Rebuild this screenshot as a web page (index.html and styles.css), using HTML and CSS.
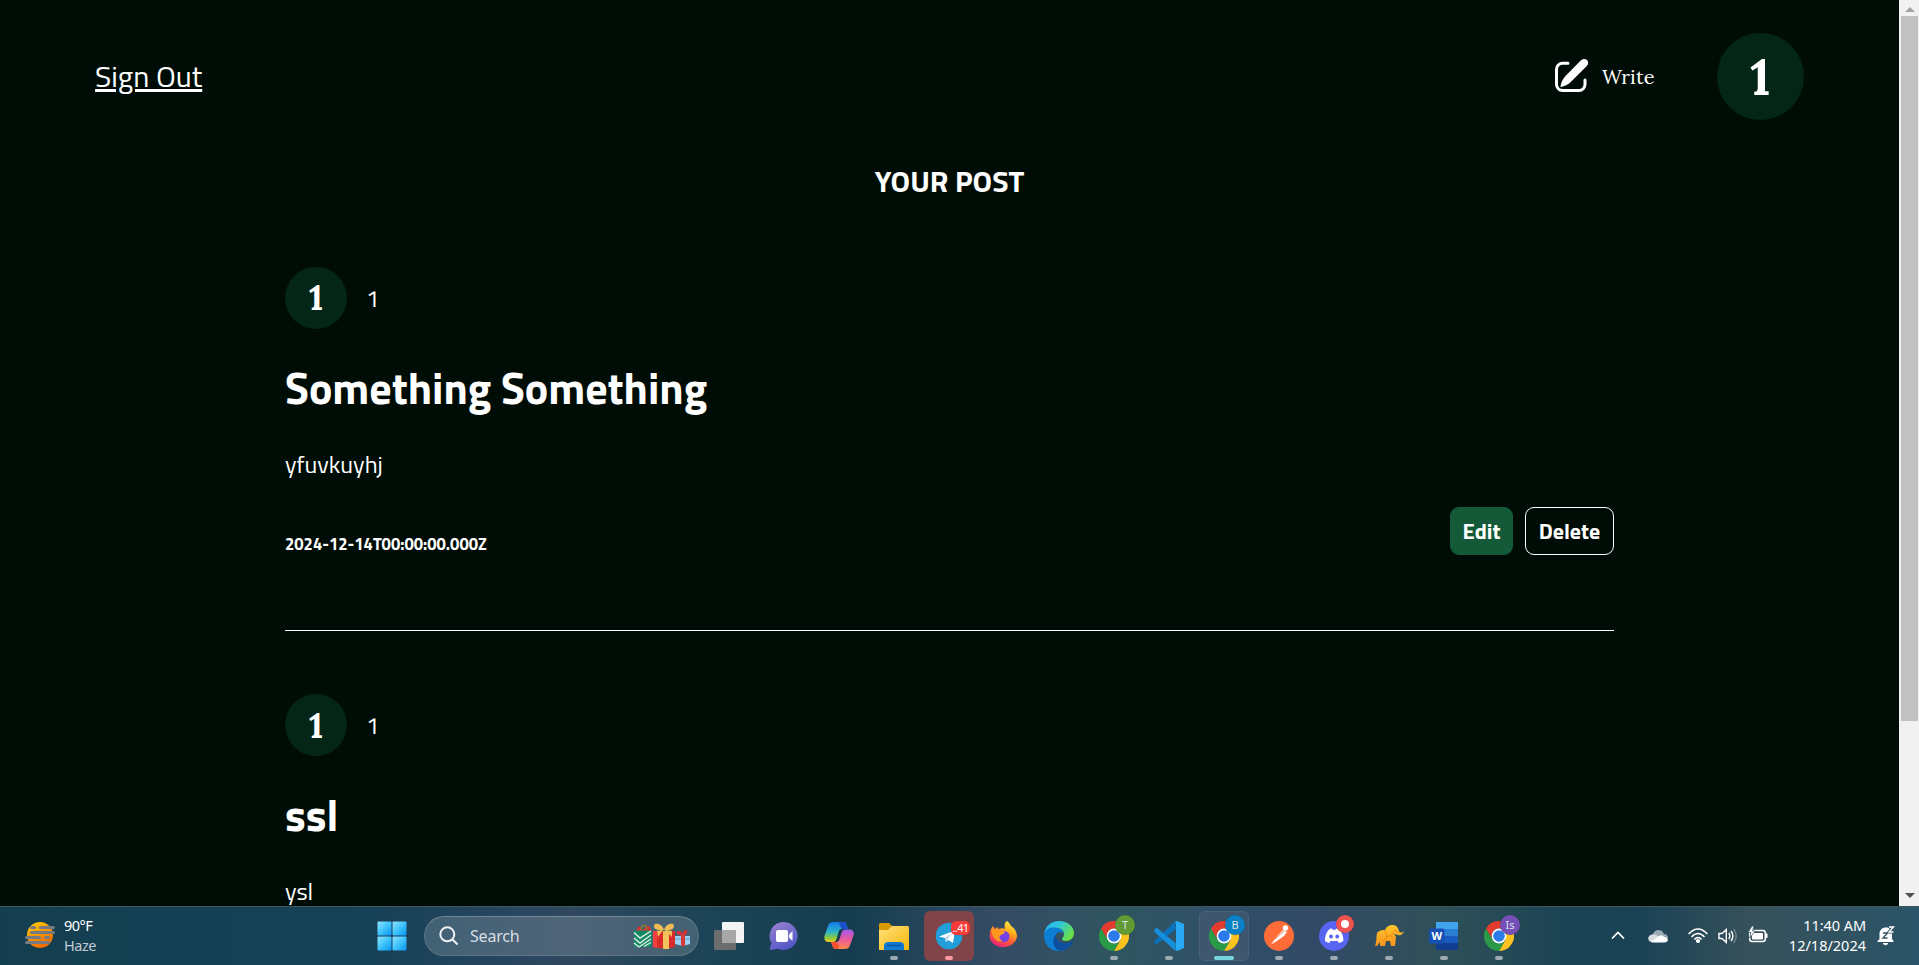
FILE: index.html
```html
<!DOCTYPE html>
<html lang="en">
<head>
<meta charset="utf-8">
<title>Your Post</title>
<link rel="stylesheet" href="styles.css">
</head>
<body>
<svg class="defs" width="0" height="0" aria-hidden="true">
  <defs>
    <linearGradient id="gWin" x1="0" y1="0" x2="1" y2="1"><stop offset="0" stop-color="#8fe3ff"/><stop offset=".5" stop-color="#3fc3fb"/><stop offset="1" stop-color="#0a93f5"/></linearGradient>
    <linearGradient id="gSun" x1="0" y1="0" x2="0.5" y2="1"><stop offset="0" stop-color="#ffd000"/><stop offset="1" stop-color="#f06a00"/></linearGradient>
    <linearGradient id="gChat" x1="0" y1="0" x2="0.5" y2="1"><stop offset="0" stop-color="#9d84cf"/><stop offset="1" stop-color="#5558c8"/></linearGradient>
    <linearGradient id="gCopA" x1="0" y1="0" x2="0" y2="1"><stop offset="0" stop-color="#1478e8"/><stop offset=".5" stop-color="#2bb5c8"/><stop offset=".8" stop-color="#8fcb3a"/><stop offset="1" stop-color="#f2c51c"/></linearGradient>
    <linearGradient id="gCopB" x1="0" y1="0" x2="0" y2="1"><stop offset="0" stop-color="#a05af0"/><stop offset=".5" stop-color="#ea5a9c"/><stop offset="1" stop-color="#ff8a4a"/></linearGradient>
    <linearGradient id="gFold" x1="0" y1="0" x2="1" y2="1"><stop offset="0" stop-color="#ffe07a"/><stop offset="1" stop-color="#f8b60c"/></linearGradient>
    <linearGradient id="gFox" x1=".8" y1="0" x2=".3" y2="1"><stop offset="0" stop-color="#fff04a"/><stop offset=".35" stop-color="#ffb01e"/><stop offset=".65" stop-color="#ff5a36"/><stop offset="1" stop-color="#e6207c"/></linearGradient>
    <linearGradient id="gEdge" x1="0" y1="0" x2="1" y2=".5"><stop offset="0" stop-color="#2aa8ee"/><stop offset=".5" stop-color="#30c8d8"/><stop offset="1" stop-color="#6be04a"/></linearGradient>
    <linearGradient id="gEl" x1="0" y1="0" x2="0" y2="1"><stop offset="0" stop-color="#ffc72e"/><stop offset="1" stop-color="#f7941d"/></linearGradient>
    <symbol id="chrome" viewBox="0 0 30 30">
      <path d="M28 7.500A15 15 0 0 1 15 30l6.500-11.300L21.500 11 15 7.500Z" fill="#fcc31e"/>
      <path d="M2 7.500A15 15 0 0 1 28 7.500H15A7.500 7.500 0 0 0 8.300 18.300Z" fill="#e33b2e"/>
      <path d="M2 7.500A15 15 0 0 0 15 30l6.500-11.300A7.500 7.500 0 0 1 8.400 18.600Z" fill="#2b9a46"/>
      <circle cx="15" cy="15" r="7.400" fill="#fff"/><circle cx="15" cy="15" r="5.800" fill="#2b7bea"/>
    </symbol>
  </defs>
</svg>
<div class="browser">
  <main class="page">
    <header class="topbar">
      <a class="signout">Sign Out</a>
      <div class="actions">
        <a class="write">
          <svg width="36" height="37" viewBox="0 0 36 37"><path d="M14 5.2H8.500A6 6 0 0 0 2.500 11.200V26.500A6 6 0 0 0 8.500 32.500H25A6 6 0 0 0 31 26.500V22" fill="none" stroke="#fff" stroke-width="3" stroke-linecap="round"/><path d="M26.500 2.700C28.600.8 31.300.4 33 2c1.800 1.800 1.500 4.300-.4 6.200L16.500 24.300C13.800 26.800 10.500 28.200 6.800 29 6.600 29 6.400 28.700 6.500 28.300 7.200 24.400 8.600 21.400 11 18.600Z" fill="#fff"/></svg>
          <span class="write-label">Write</span>
        </a>
        <div class="avatar avatar-lg"><span>1</span></div>
      </div>
    </header>
    <h1 class="heading">YOUR POST</h1>
    <article class="post">
      <div class="author"><div class="avatar"><span>1</span></div><span class="name">1</span></div>
      <h2 class="title">Something Something</h2>
      <p class="text">yfuvkuyhj</p>
      <div class="foot">
        <span class="date">2024-12-14T00:00:00.000Z</span>
        <div class="buttons"><button class="btn edit">Edit</button><button class="btn delete">Delete</button></div>
      </div>
    </article>
    <article class="post post-next">
      <div class="author"><div class="avatar"><span>1</span></div><span class="name">1</span></div>
      <h2 class="title">ssl</h2>
      <p class="text">ysl</p>
    </article>
  </main>
  <div class="scrollbar">
    <div class="arrow"><svg width="10" height="5"><path d="M0 5 5 0l5 5Z" fill="#a3a3a3"/></svg></div>
    <div class="thumb"></div>
    <div class="arrow arrow-down"><svg width="10" height="5"><path d="M0 0 5 5l5-5Z" fill="#505050"/></svg></div>
  </div>
</div>
<footer class="taskbar">
  <div class="weather">
    <svg width="30" height="26" viewBox="0 0 30 26"><circle cx="15" cy="13" r="13" fill="url(#gSun)"/><g stroke="#777a80" stroke-width="3" stroke-linecap="round"><path d="M6.500 5.500h3M15.500 5.500h13M6.500 10.500h22M1.500 15.500h13M20.500 15.500h3M1.500 20.500h22"/></g></svg>
    <div class="weather-text"><span>90°F</span><span class="dim">Haze</span></div>
  </div>
  <div class="apps">
    <div class="app start"><svg width="30" height="30"><g fill="url(#gWin)"><rect x=".5" y=".5" width="14" height="14" rx="1"/><rect x="15.500" y=".5" width="14" height="14" rx="1"/><rect x=".5" y="15.500" width="14" height="14" rx="1"/><rect x="15.500" y="15.500" width="14" height="14" rx="1"/></g></svg></div>
    <div class="search">
      <svg width="20" height="20" viewBox="0 0 20 20" fill="none" stroke="#eef2f4" stroke-width="2"><circle cx="8.300" cy="8.300" r="7"/><path d="M13.300 13.300 18.500 18.500"/></svg>
      <span>Search</span>
      <svg class="gifts" width="58" height="28" viewBox="0 0 58 28">
        <path d="M3 9 6 4l4 4 5-5 4 6Z" fill="#d83232"/><path d="M8 8C8 2 14 2 14 8" fill="none" stroke="#8a7a30" stroke-width="1.500"/>
        <path d="M1 8.500h18V22L17 25H1Z" fill="#148a64"/><path d="M1 10.500l6 5.500 11-7M1 16l6 5 11-8M1 21l5 4 12-8M11 24.500l7-4" fill="none" stroke="#dceee6" stroke-width="1.400"/>
        <path d="M20 9h22v16l-10 2-12-2Z" fill="#d92b2b"/><path d="M30 9h6v18h-6Z" fill="#f2c35a"/><path d="M20 25V9l4 0v17Z" fill="#f04040"/><path d="M31 8C20 9 20 4 22 2c4-1 8 2 9 6 1-4 5-7 9-6 2 2 2 7-9 6ZM30 8l-5 7-1-6ZM32 8l7 7 0-6Z" fill="#f0bd55"/>
        <path d="M42 14h15v8l-7 2-8-2Z" fill="#9bd0f2"/><path d="M42 17h15" stroke="#5b9fd8"/><path d="M48 13h4v11h-4Z" fill="#d83a3a"/><path d="M50 13c-8 1-7-4-5-4 3 0 5 2 5 4 0-6 3-6 4-4s-1 4-4 4" fill="#d82f3a"/>
      </svg>
    </div>
    <div class="app"><svg width="30" height="30"><rect x="8" y="1" width="22" height="21" rx="1" fill="#f3f3f3"/><rect x="0" y="9" width="22" height="20" rx="1" fill="#6c6c6c"/><path d="M8 9h14v13H8Z" fill="#a7a7a7"/></svg></div>
    <div class="app"><svg width="30" height="30"><path d="M15 1A14 14 0 1 1 9 27.800L2 29c-1 0-1.500-1-1-2l1.500-5A14 14 0 0 1 15 1Z" fill="url(#gChat)"/><rect x="7" y="9" width="12" height="12" rx="2" fill="#fff"/><path d="M20 13.500 23.500 10v10L20 16.500Z" fill="#fff"/></svg></div>
    <div class="app"><svg width="30" height="30"><path d="M9 1H19c2 0 3 1 3.500 3L24 8h-6c-2 0-3 1-3.500 3l-2 7c-.5 2-1.500 3-3.500 3H4c-3 0-4-3-3.500-6L4 5c1-3 2.500-4 5-4Z" fill="url(#gCopA)"/><path d="M15 1h4c2 0 3 1 3.500 3L24 8h-6L15.500 4Z" fill="#1a4fd0"/><path d="M21 28H12c-2 0-3-1-3.500-3L7 21h5c2 0 3-1 3.500-3l2-6c.5-2 1.500-3.500 4-3.500H26c3 0 4.500 3 3.500 6L26 24c-1 3-2.500 4-5 4Z" fill="url(#gCopB)"/><path d="M7 21h5l3 3-1 4h-2c-2 0-3-1-3.500-3Z" fill="#f2502e"/></svg></div>
    <div class="app open"><svg width="30" height="30"><path d="M0 4c0-1.500.5-2 2-2h8l3 3v6H0Z" fill="#d99a08"/><path d="M0 9h9l4-4h15c1.500 0 2 .5 2 2v22H0Z" fill="url(#gFold)"/><path d="M5 29v-4c0-3 1.500-4 4-4h12c2.500 0 4 1 4 4v4Z" fill="#0f7bd4"/><path d="M8 24.500h14" stroke="#0a55a0" stroke-width="1.500"/></svg></div>
    <div class="app alert open"><svg width="30" height="30"><circle cx="15" cy="15" r="13.300" fill="#229ed9"/><path d="M5 15.500 21 9.500 19 22l-5-3-2 2-1-4Z" fill="#fff"/><path d="M11 17 18 12l-5 6-1 3Z" fill="#a9cfe6"/></svg><span class="badge count">..41</span></div>
    <div class="app"><svg width="30" height="30"><path d="M18 0c2 1 3 3 4 5 4 2 6 7 6 11a14 12.500 0 0 1-27 2C0 12 2 7 4 5l2 3 3-2 0 2c3-1 5-1 7 0C15 4 16 1 18 0Z" fill="url(#gFox)"/><circle cx="15" cy="15.500" r="5.500" fill="#7542e5"/><path d="M2 8c4 1 6 0 9 2 2 0 4 0 5 1-1 2-3 2-4 3-3 1-1 6 2 6-7 2-11-4-12-12Z" fill="#ff9a1f"/></svg></div>
    <div class="app"><svg width="30" height="30"><path d="M0 14C1 5 7 0 15 0c9 0 15 6 15 12 0 5-4 8-8 8-3 0-4-1-4-2s2-2 2-5c0-4-4-6-8-6C6 7 1 10 0 14Z" fill="url(#gEdge)"/><path d="M0 15C0 9 5 6.500 10 6.500c5 0 9 2.500 9 6-1-1-3-1.500-5-1-4 2-5 8-1 13 3 4 8 4 10 3-3 2-5 2.500-8 2.500C7 30 0 24 0 15Z" fill="#0c7fd4"/><path d="M14 11.500c-3 2-3 6 1 9 4 2.500 9 2 13 0 1 0 1 .5.500 1.500C26 27 20 30 15 29.700 8 27 7 16 14 11.500Z" fill="#0d4f9e"/></svg></div>
    <div class="app open"><svg width="30" height="30"><use href="#chrome"/></svg><span class="badge green">T</span></div>
    <div class="app open"><svg width="30" height="30"><path d="M22 8 3 23c-1 .5-3-1-3-2.500L21 .5Z" fill="#0b72bd"/><path d="M3 7 22 22.500 21 29.500 0 10.500C0 9 2 6.500 3 7Z" fill="#148fdc"/><path d="M21 .5 23 0l7 3v24l-7 3-2-1 1-2V3Z" fill="#29a9f4"/></svg></div>
    <div class="app active"><svg width="30" height="30"><use href="#chrome"/></svg><span class="badge blue">B</span></div>
    <div class="app open"><svg width="30" height="30"><circle cx="15" cy="15" r="15" fill="#ff6c37"/><circle cx="21.500" cy="7" r="2.700" fill="#fff"/><path d="M19 9 23 11 20 15 13 20 7 23.500 12 16.500Z" fill="#fff"/><path d="M20 10 11 18" stroke="#ff6c37" stroke-width=".8"/></svg></div>
    <div class="app open"><svg width="30" height="30"><circle cx="15" cy="15" r="15" fill="#5865f2"/><path d="M9.500 9C11 8 12 7.700 13 7.600l.6 1.200h3L17.200 7.600C18.500 7.800 20 8.300 21 9c3 4 3.500 8 3.300 11-1.500 1.200-3 1.800-4.500 2L18.800 20H11.300L10.300 22c-1.500-.3-3-1-4.300-2-.3-4 1-8 3.500-11Z" fill="#fff"/><circle cx="12" cy="15.500" r="1.900" fill="#5865f2"/><circle cx="18.200" cy="15.500" r="1.900" fill="#5865f2"/></svg><span class="badge rec"></span></div>
    <div class="app open"><svg width="30" height="30"><path d="M3 12c3-3 5-3 8-3 1-3 4-5 8-5 3 0 5 2 6 6 1 2 3 2 5 0-1 3-3 5-6 4l-4-1 2 3-1 9h-4l-1-5-4 0-1 5H6l0-4-3 4-2 0C3 20 2 17 3 12Z" fill="url(#gEl)"/><path d="m11 9 2 7 6-3 2-4 4 3M13 16l-4 5M16 15l5 3" fill="none" stroke="#f08a12" stroke-width="1"/></svg></div>
    <div class="app open"><svg width="30" height="30"><path d="M7 1h22v7.500H7Z" fill="#41a5ee"/><path d="M7 8h22v7H7Z" fill="#2b7cd3"/><path d="M7 15h22v7H7Z" fill="#185abd"/><path d="M7 22h22v7H7Z" fill="#103f91"/><rect y="7.500" width="15.500" height="15" rx="1.500" fill="#1650b4"/><text x="7.700" y="19" class="word">W</text></svg></div>
    <div class="app open"><svg width="30" height="30"><use href="#chrome"/></svg><span class="badge purple">Is</span></div>
  </div>
  <div class="tray">
    <svg class="chev" width="14" height="8" fill="none" stroke="#fff" stroke-width="1.700"><path d="M1 7.500 7 1.500l6 6"/></svg>
    <svg class="cloud" width="20" height="14"><path d="M5 5C7 0 14-.5 16 5c3 0 4 2 4 4L15 10 5 6Z" fill="#9caab2"/><path d="M4 13C-1 13-1 6 4 5.500c3-.5 5 .5 7 2.500L4 13Z" fill="#d7dde0"/><path d="M3 13 11 7c2-1.500 4-.5 5 1 5 0 5 5 1 5.500H4Z" fill="#fff"/></svg>
    <svg class="wifi" width="20" height="16" fill="none" stroke="#fff" stroke-width="1.600"><path d="M.6 6Q10-4 19.400 6M3.500 9Q10 2 16.500 9M6.400 11.500Q10 7.500 13.600 11.500"/><circle cx="10" cy="13" r="1.300" fill="#fff"/></svg>
    <svg class="sound" width="20" height="16" fill="none" stroke="#fff" stroke-width="1.400"><path d="M1 5.500H4L8.300 1.500v13L4 10.500H1Z M10.800 5q2 3 0 6M13 3q3.800 5 0 10"/><path d="M15.500 1q5.500 7 0 14" stroke="#70858d"/></svg>
    <svg class="battery" width="20" height="17"><rect x="1.700" y="4.500" width="15.600" height="11" rx="2.500" fill="none" stroke="#fff" stroke-width="1.500"/><rect x="4" y="7" width="11" height="6.500" rx="1" fill="#fff"/><path d="M18 7.500h1.500v4.500H18Z" fill="#fff"/><path d="M4 0 0 6.500h3L1.500 12 7.500 5H4.500L6 0Z" fill="#fff" stroke="#2f515b" stroke-width=".7"/></svg>
    <div class="clock"><span class="time">11:40 AM</span><span class="day">12/18/2024</span></div>
    <svg class="bell" width="18" height="20"><path d="M2.500 13V8C2.500 4 5 1.500 9 1.500s6 2.500 6 6.500v5l1.500 2v1H.5v-1Z" fill="#fff"/><path d="M6 17.500q2.500 2.500 5 0Z" fill="#fff" stroke="#fff"/><path d="M6 7h4.500L6 12h4.500" fill="none" stroke="#365561" stroke-width="1.400"/><path d="M12 1h4.500L12 6h4.500" fill="none" stroke="#365561" stroke-width="3"/><path d="M12 1h4.500L12 6h4.500" fill="none" stroke="#fff" stroke-width="1.300"/></svg>
  </div>
</footer>
</body>
</html>
```
FILE: styles.css
```css
* { box-sizing: border-box; margin: 0; padding: 0; }
body { height: 965px; display: flex; flex-direction: column; overflow: hidden; background: #000d06; color: #fff; font-family: "Titillium Web", Roboto, sans-serif; }
.defs { position: absolute; }
svg { display: block; flex: none; }
.browser { display: flex; height: 906px; flex: none; overflow: hidden; }
.page { flex: 1; overflow: hidden; }
.topbar { display: flex; justify-content: space-between; align-items: center; height: 153px; padding: 0 95px; }
.signout { padding-bottom: 2px; font-size: 30px; line-height: 40px; text-decoration: underline; text-decoration-thickness: 3px; text-underline-offset: 2px; }
.actions { display: flex; align-items: center; gap: 63px; }
.write { display: flex; align-items: center; gap: 12px; }
.write-label { width: 52px; font: 20px/28px Lora, "Liberation Serif", serif; white-space: nowrap; }
.avatar { display: flex; align-items: center; justify-content: center; width: 62px; height: 62px; border-radius: 50%; background: #042617; font: bold 35px/1 Lora, "DejaVu Serif", serif; }
.avatar-lg { width: 87px; height: 87px; font-size: 50px; }
.heading { font-size: 30px; line-height: 40px; margin-top: 8px; text-align: center; font-weight: 700; }
.post { margin: 65px 285px 0; height: 365px; border-bottom: 1px solid #fff; }
.author { display: flex; align-items: center; gap: 19px; height: 63px; }
.name { font-size: 24px; line-height: 30px; }
.title { margin-top: 29px; font-size: 44px; line-height: 60px; font-weight: 700; }
.text { margin-top: 29px; font-size: 24px; line-height: 34px; }
.foot { display: flex; justify-content: space-between; margin-top: 26px; }
.post-next { margin-top: 63px; border: 0; }
.post-next .author { height: 62px; }
.date { padding-top: 26px; font-size: 16.6px; line-height: 22px; font-weight: 700; }
.buttons { display: flex; gap: 12px; }
.btn { height: 48px; border: 1px solid #fff; border-radius: 9px; color: #fff; font: 700 22px/30px "Titillium Web", Roboto, sans-serif; text-align: center; }
.edit { width: 63px; background: #145a38; border-color: #145a38; }
.delete { width: 89px; background: transparent; }
.scrollbar { width: 20px; background: #f1f1f1; display: flex; flex-direction: column; }
.arrow { height: 16px; display: flex; align-items: center; justify-content: center; padding-top: 2px; padding-left: 1px; }
.arrow-down { margin-top: auto; height: 21px; padding: 0 0 0 1px; }
.thumb { height: 705px; margin: 0 1px 0 2px; background: #c1c1c1; }

.taskbar { display: flex; height: 59px; border-top: 1px solid #42565d; font-family: "Segoe UI", "Noto Sans", sans-serif;
  background: linear-gradient(90deg, #143f50 0, #174158 380px, #2f4860 570px, #1c4356 710px, #153d4f 850px, #344c64 1000px, #2f5560 1120px, #30506a 1220px, #324a66 1310px, #2f5058 1440px, #1b4354 1570px, #1a4256 1640px, #36515a 1750px, #2a5468 1919px); }
.weather { display: flex; gap: 9px; width: 367px; padding: 15px 0 0 25px; }
.weather-text { display: flex; flex-direction: column; margin-top: -7px; font-size: 14.5px; line-height: 20px; letter-spacing: -.5px; }
.dim { color: #c0ccd1; }
.apps { display: flex; gap: 5px; padding-top: 4px; }
.app { position: relative; display: flex; width: 50px; height: 50px; border-radius: 6px; align-items: center; justify-content: center; }
.start { margin-right: 2px; }
.alert { background: #804449; }
.active { background: #3e576e; box-shadow: inset 0 0 0 1px #4a6174; }
.open::after, .active::after { content: ""; position: absolute; bottom: 1px; left: 21px; width: 8px; height: 4px; border-radius: 2px; background: #9eabb3; }
.alert::after { background: #ff9ba4; }
.active::after { left: 15px; width: 20px; background: #76d5dc; }
.badge { position: absolute; left: 26px; top: 4px; width: 20px; height: 20px; border-radius: 50%; color: #d7e4ea; font-size: 11px; line-height: 20px; text-align: center; box-shadow: 0 0 1px #0006; }
.green { background: #619b35; }
.blue { background: #0a80c6; }
.purple { background: #7750b7; }
.rec { left: 27px; width: 18px; height: 18px; border: 5px solid #ee5350; background: #fff; }
.count { left: 27px; top: 10px; height: 14px; width: 19px; border-radius: 5px; background: #f53b38; color: #fff; line-height: 14px; letter-spacing: -.6px; }
.word { fill: #fff; font: bold 11px "Open Sans", sans-serif; text-anchor: middle; }
.search { display: flex; align-items: center; width: 275px; height: 40px; margin-top: 5px; padding: 0 7px 0 14px; border-radius: 20px; background: rgba(255,255,255,.16); border: 1px solid rgba(255,255,255,.12); border-top-color: rgba(255,255,255,.25); color: #d8dfe4; font-size: 16px; letter-spacing: -.2px; }
.search span { margin-left: 11px; }
.gifts { margin-left: auto; }
.tray { display: flex; margin-left: 87px; }
.chev { margin-top: 24px; }
.cloud { margin: 22px 0 0 23px; }
.wifi { margin: 21px 0 0 20px; }
.sound { margin: 21px 0 0 10px; }
.battery { margin: 19px 0 0 10px; }
.clock { display: flex; flex-direction: column; align-items: flex-end; width: 98px; margin-top: 8px; font-size: 14.5px; line-height: 20px; }
.time { letter-spacing: -.05px; }
.bell { margin: 19px 0 0 11px; }
```
